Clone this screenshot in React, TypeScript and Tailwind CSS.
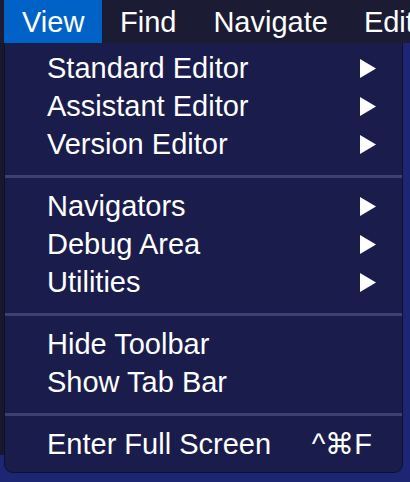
import React from 'react';

type Item = { label: string; sub?: boolean; shortcut?: string };

const groups: Item[][] = [
  [
    { label: 'Standard Editor', sub: true },
    { label: 'Assistant Editor', sub: true },
    { label: 'Version Editor', sub: true },
  ],
  [
    { label: 'Navigators', sub: true },
    { label: 'Debug Area', sub: true },
    { label: 'Utilities', sub: true },
  ],
  [{ label: 'Hide Toolbar' }, { label: 'Show Tab Bar' }],
  [{ label: 'Enter Full Screen', shortcut: '^⌘F' }],
];

const Arrow = () => (
  <svg width="16" height="19" viewBox="0 0 16 19" className="mr-[26px]">
    <polygon points="0,0 16,9.5 0,19" fill="#ffffff" />
  </svg>
);

const Row = ({ item }: { item: Item }) => (
  <div className="flex h-[38px] items-center justify-between pl-[42px] leading-[38px]">
    <span>{item.label}</span>
    {item.sub && <Arrow />}
    {item.shortcut && <span className="mr-[30px]">{item.shortcut}</span>}
  </div>
);

export default function App() {
  return (
    <div
      className="flex h-[482px] w-[410px] flex-col overflow-hidden bg-[#1d2672] text-[29px] text-white"
      style={{ fontFamily: '"Liberation Sans", Arial, sans-serif' }}
    >
      <div className="flex h-[43px] shrink-0 items-center whitespace-nowrap bg-[#1b1c33] pl-[4px] leading-[44px]">
        <div className="h-full w-[98px] shrink-0 bg-[#0062c6] pl-[18px]">View</div>
        <div className="ml-[18px] shrink-0">Find</div>
        <div className="ml-[37px] shrink-0">Navigate</div>
        <div className="ml-[36px] shrink-0">Edit</div>
      </div>
      <div className="flex">
        <div className="h-[412px] w-[4px] shrink-0 bg-[#17182e]" />
        <div className="w-[399px] shrink-0 rounded-b-[9px] border border-t-0 border-[#0e1030] bg-[#1a1d4c] pb-[9px] pt-[6px]">
          {groups.map((g, i) => (
            <div key={i}>
              {i > 0 && <div className="mb-[9px] mt-[12px] h-[3px] bg-[#3c4171]" />}
              {g.map((item) => (
                <Row key={item.label} item={item} />
              ))}
            </div>
          ))}
        </div>
      </div>
    </div>
  );
}
